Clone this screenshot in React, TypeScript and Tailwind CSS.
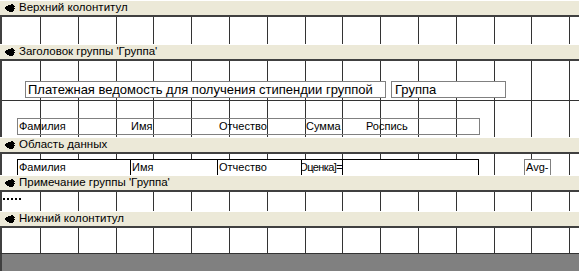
import React from "react";

const GRID_X = [40, 78, 116, 153, 191, 229, 267, 305, 342, 380, 418, 456, 494, 531, 569];

function Grid({ h, hLines = [] }: { h: number; hLines?: number[] }) {
  return (
    <svg className="absolute left-0 top-0" width={579} height={h} shapeRendering="crispEdges">
      {GRID_X.map((x) => (
        <rect key={x} x={x - 2} y={0} width={1} height={h} fill="#333333" />
      ))}
      {hLines.map((y) => (
        <rect key={"h" + y} x={0} y={y} width={579} height={1} fill="#333333" />
      ))}
    </svg>
  );
}

function SectionIcon() {
  const rows = [
    "......XX..",
    "...XXXXXX.",
    ".XXXXXXXXX",
    "XXXXXXXXX.",
    "XXXXXXXXXX",
    ".XXXXXXXX.",
    "..XXXXXXX.",
    "....XXXX..",
  ];
  return (
    <svg width={10} height={8} shapeRendering="crispEdges" className="shrink-0">
      {rows.flatMap((r, y) =>
        r.split("").map((c, x) => (c === "X" ? <rect key={`${x}-${y}`} x={x} y={y} width={1} height={1} fill="#000" /> : null))
      )}
    </svg>
  );
}

function Band({ title }: { title: string }) {
  return (
    <div className="h-[17px] bg-[#ECE9D8] border-t border-white border-b-2 border-b-[#404040] flex items-center pl-[5px] gap-[4px]">
      <SectionIcon />
      <span className="text-[11.5px] leading-none text-black whitespace-nowrap">{title}</span>
    </div>
  );
}

function Section({ h, hLines, children }: { h: number; hLines?: number[]; children?: React.ReactNode }) {
  return (
    <div className="relative bg-white border-l-2 border-[#404040] overflow-hidden" style={{ height: h }}>
      <Grid h={h} hLines={hLines} />
      {children}
    </div>
  );
}

export default function App() {
  return (
    <div className="w-[579px] h-[271px] overflow-hidden bg-[#808080] flex flex-col" style={{ fontFamily: '"Liberation Sans", Arial, sans-serif' }}>
      <Band title="Верхний колонтитул" />
      <Section h={27} />
      <Band title="Заголовок группы 'Группа'" />
      <Section h={76} hLines={[39]}>
        <div className="absolute left-[23px] top-[20px] w-[361px] h-[17px] bg-white border border-[#808080] pl-[2px] text-[13px] leading-[15px] text-black whitespace-nowrap overflow-hidden">
          Платежная ведомость для получения стипендии группой
        </div>
        <div className="absolute left-[389px] top-[20px] w-[115px] h-[17px] bg-white border border-[#808080] pl-[3px] text-[13px] leading-[15px] text-black whitespace-nowrap overflow-hidden">
          Группа
        </div>
        <div className="absolute left-[15px] top-[57px] w-[463px] h-[17px] border border-[#808080] text-[11px] leading-[15px] text-black whitespace-nowrap">
          <span className="absolute left-[1px] top-0">Фамилия</span>
          <span className="absolute left-[113px] top-0">Имя</span>
          <span className="absolute left-[201px] top-0">Отчество</span>
          <span className="absolute left-[288px] top-0">Сумма</span>
          <span className="absolute left-[348px] top-0">Роспись</span>
        </div>
      </Section>
      <Band title="Область данных" />
      <Section h={21}>
        <div className="absolute left-[15px] top-[5px] h-[17px] flex text-[11px] leading-[15px] text-black whitespace-nowrap">
          <div className="w-[113px] h-full bg-white border-l border-t border-black pl-[1px]">Фамилия</div>
          <div className="w-[87px] h-full bg-white border-l border-t border-black pl-[1px]">Имя</div>
          <div className="w-[84px] h-full bg-white border-l border-t border-black pl-[1px]">Отчество</div>
          <div className="w-[41px] h-full bg-white border-l border-t border-black flex justify-end overflow-hidden">
            <span className="tracking-[-0.6px]">Оценка]=</span>
          </div>
          <div className="w-[137px] h-full bg-white border-l border-t border-r border-black" />
        </div>
        <div className="absolute left-[522px] top-[5px] w-[27px] h-[17px] bg-white border border-[#808080] pl-[1px] text-[11px] leading-[15px] text-black whitespace-nowrap overflow-hidden">
          Avg-
        </div>
      </Section>
      <Band title="Примечание группы 'Группа'" />
      <Section h={19}>
        <div className="absolute left-[1px] top-[6px] flex gap-[2px]">
          <div className="w-[2px] h-[2px] bg-black" />
          <div className="w-[2px] h-[2px] bg-black" />
          <div className="w-[2px] h-[2px] bg-black" />
          <div className="w-[2px] h-[2px] bg-black" />
          <div className="w-[2px] h-[2px] bg-black" />
        </div>
      </Section>
      <Band title="Нижний колонтитул" />
      <Section h={25} />
      <div className="h-px bg-[#333333]" />
      <div className="flex-1 border-l-2 border-[#404040] bg-[#808080]" />
    </div>
  );
}
